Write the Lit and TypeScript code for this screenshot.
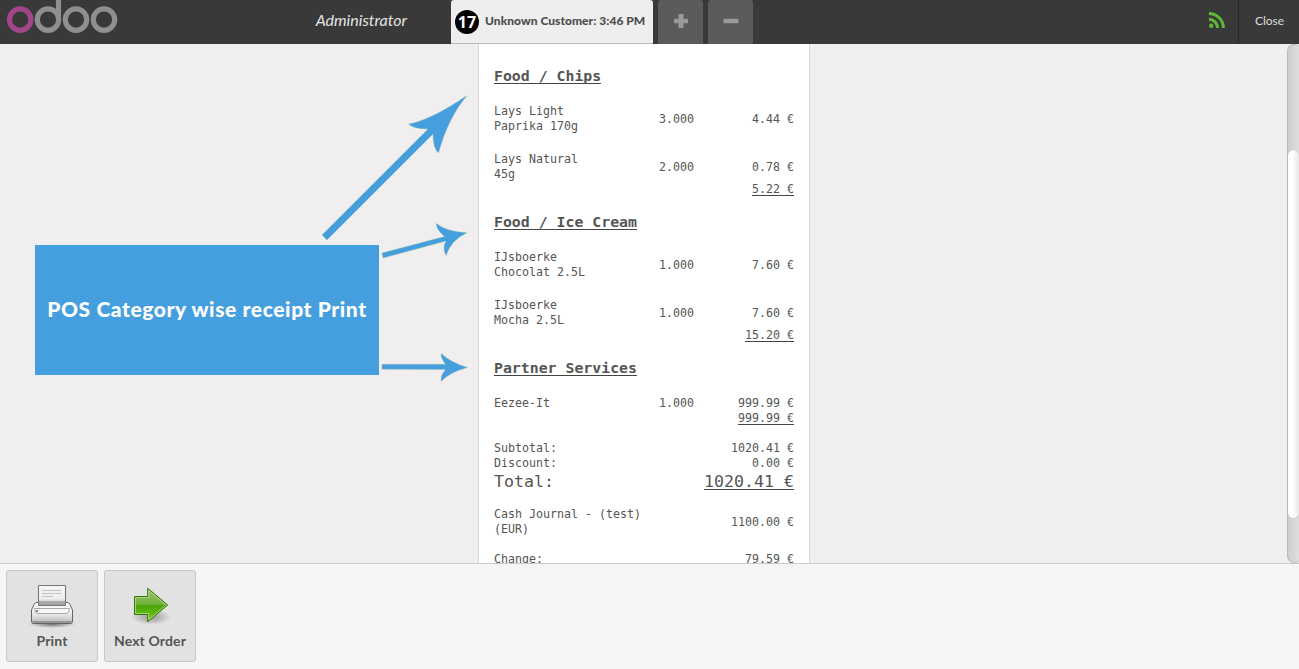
import { LitElement, html, css, svg } from "lit";
import { customElement } from "lit/decorators.js";

interface Line {
  name: string[];
  qty: string;
  price: string;
}

interface Category {
  title: string;
  lines: Line[];
  total: string;
}

const categories: Category[] = [
  {
    title: "Food / Chips",
    lines: [
      { name: ["Lays Light", "Paprika 170g"], qty: "3.000", price: "4.44 €" },
      { name: ["Lays Natural", "45g"], qty: "2.000", price: "0.78 €" },
    ],
    total: "5.22 €",
  },
  {
    title: "Food / Ice Cream",
    lines: [
      { name: ["IJsboerke", "Chocolat 2.5L"], qty: "1.000", price: "7.60 €" },
      { name: ["IJsboerke", "Mocha 2.5L"], qty: "1.000", price: "7.60 €" },
    ],
    total: "15.20 €",
  },
  {
    title: "Partner Services",
    lines: [{ name: ["Eezee-It"], qty: "1.000", price: "999.99 €" }],
    total: "999.99 €",
  },
];

@customElement("pos-topbar")
class PosTopbar extends LitElement {
  static styles = css`
    :host {
      display: flex;
      height: 44px;
      background: #393939;
      color: #ddd;
      font-family: Lato, sans-serif;
    }
    .brand {
      width: 435px;
      display: flex;
      justify-content: space-between;
      box-sizing: border-box;
      padding-right: 27px;
      border-right: 1px solid #353535;
    }
    .logo {
      display: block;
    }
    .user {
      font-size: 16px;
      font-style: italic;
      line-height: 40px;
      color: #e4e4e4;
    }
    .tabs {
      display: flex;
      gap: 5px;
      padding-left: 16px;
      flex: 1;
    }
    .order {
      display: flex;
      align-items: center;
      box-sizing: border-box;
      width: 202px;
      padding: 0 0 0 4px;
      gap: 6px;
      background: #eee;
      border-bottom: 1px solid #bbb;
      border-radius: 3px 3px 0 0;
      color: #4d4d4d;
      font-size: 12px;
      font-weight: 900;
      white-space: nowrap;
    }
    .num {
      flex: none;
      width: 24px;
      height: 24px;
      border-radius: 50%;
      background: #000;
      color: #fff;
      text-align: center;
      font-family: "Open Sans", sans-serif;
      font-size: 16px;
      line-height: 24px;
      font-weight: 700;
    }
    .label {
      line-height: 41px;
      margin-top: -2px;
      letter-spacing: 0.04px;
    }
    .square {
      width: 45px;
      display: grid;
      place-items: center;
      background: #5b5b5b;
      border-radius: 3px 3px 0 0;
    }
    .wifi {
      width: 40px;
      display: flex;
      border-right: 1px solid #292929;
      margin-left: auto;
    }
    .close {
      width: 59px;
      padding-left: 1px;
      text-align: center;
      font-size: 12px;
      line-height: 42px;
    }
  `;

  render() {
    return html`
      <div class="brand">
        <svg class="logo" width="120" height="40" fill="none" stroke="#8f8f8f" stroke-width="5.2">
          <circle cx="20.2" cy="19.6" r="10.7" stroke="#a24689" />
          <circle cx="48" cy="19.6" r="10.7" />
          <path d="M58.5 0V20" />
          <circle cx="76" cy="19.6" r="10.7" />
          <circle cx="104" cy="19.6" r="10.7" />
        </svg>
        <span class="user">Administrator</span>
      </div>
      <div class="tabs">
        <div class="order">
          <span class="num">17</span>
          <span class="label">Unknown Customer: 3:46 PM</span>
        </div>
        <div class="square">
          <svg width="45" height="44" fill="#999"><path d="M20.5 14h5v4.700h4.500v4.600h-4.500V28h-5v-4.700H16v-4.600h4.500z" /></svg>
        </div>
        <div class="square">
          <svg width="45" height="44"><rect x="15.500" y="18.700" width="15" height="4.600" rx="1" fill="#999" /></svg>
        </div>
      </div>
      <div class="wifi">
        <svg width="40" height="44" fill="none" stroke="#5eb937" stroke-width="3">
          <circle cx="13.200" cy="25.700" r="2.200" fill="#5eb937" stroke="none" />
          <path d="M11 19.300a8.700 8.700 0 0 1 8.600 8.700M11 13.500A14.500 14.500 0 0 1 25.400 28" />
        </svg>
      </div>
      <div class="close">Close</div>
    `;
  }
}

@customElement("pos-receipt")
class PosReceipt extends LitElement {
  static styles = css`
    :host {
      display: block;
      box-sizing: border-box;
      width: 332px;
      height: 519px;
      overflow: hidden;
      padding: 7px 15px 0;
      background: #fff;
      border: solid #dadadc;
      border-width: 0 1px;
      color: #555;
      font: 11.63px/15px "DejaVu Sans Mono", monospace;
    }
    .title {
      display: flex;
      height: 53px;
      box-sizing: border-box;
      padding-top: 15px;
      font-size: 14.850px;
      line-height: 20px;
      font-weight: 700;
    }
    .lines {
      display: flex;
      flex-direction: column;
      gap: 18px;
    }
    .row {
      display: grid;
      grid-template-columns: 150px 50px 100px;
      align-items: center;
    }
    .right {
      text-align: right;
      white-space: nowrap;
    }
    .text {
      display: block;
      white-space: nowrap;
    }
    .under {
      border-bottom: 1px solid #444;
      display: inline-block;
      height: 13px;
      line-height: 15px;
    }
    .subtotal {
      display: flex;
      justify-content: flex-end;
      height: 15px;
    }
    .title .under {
      height: 17px;
      line-height: 21px;
    }
    .pair {
      display: flex;
      justify-content: space-between;
      align-items: center;
    }
    .big {
      font-size: 16.600px;
      height: 21px;
      line-height: 21px;
      align-items: flex-start;
    }
    .big .under {
      height: 18px;
      line-height: 21px;
    }
    .sums,
    .journal,
    .change {
      margin-top: 15px;
    }
  `;

  render() {
    return html`
      ${categories.map(
        (c) => html`
          <div class="title"><span class="under">${c.title}</span></div>
          <div class="lines">
            ${c.lines.map(
              (l) => html`<div class="row">
                <div>${l.name.map((n) => html`<span class="text">${n}</span>`)}</div>
                <div class="right">${l.qty}</div>
                <div class="right">${l.price}</div>
              </div>`
            )}
          </div>
          <div class="subtotal"><span class="under">${c.total}</span></div>
        `
      )}
      <div class="sums">
        <div class="pair"><span>Subtotal:</span><span>1020.41 €</span></div>
        <div class="pair"><span>Discount:</span><span>0.00 €</span></div>
        <div class="pair big"><span>Total:</span><span class="under">1020.41 €</span></div>
      </div>
      <div class="pair journal">
        <div><span class="text">Cash Journal - (test)</span><span class="text">(EUR)</span></div>
        <span>1100.00 €</span>
      </div>
      <div class="pair change"><span>Change:</span><span>79.59 €</span></div>
    `;
  }
}

const printer = svg`
  <defs>
    <linearGradient id="body" x2="0" y2="1"><stop stop-color="#fff"/><stop offset=".6" stop-color="#e4e4e4"/><stop offset="1" stop-color="#b5b5b5"/></linearGradient>
    <linearGradient id="paper" x2="0" y2="1"><stop stop-color="#f6f6f6"/><stop offset=".65" stop-color="#eee"/><stop offset="1" stop-color="#aaa"/></linearGradient>
    <radialGradient id="pshade"><stop stop-color="#000" stop-opacity=".5"/><stop offset="1" stop-color="#000" stop-opacity="0"/></radialGradient>
  </defs>
  <ellipse cx="24" cy="41" rx="24" ry="4" fill="url(#pshade)"/>
  <path d="M6.500 20.500 Q7 19.500 9 19.500H39Q41 19.500 41.500 20.500L44.500 27V38.500Q44.500 40.500 42.500 40.500H5.500Q3.500 40.500 3.500 38.500V27Z" fill="url(#body)" stroke="#656565"/>
  <path d="M10.500 22.500V2.500H37.500V22.500Z" fill="url(#paper)" stroke="#777"/>
  <path d="M14 7.500H33M14 10.500H33M14 13.500H25" stroke="#c4c4c4"/>
  <path d="M11 18H37V22H11Z" fill="#999" opacity=".65"/>
  <path d="M6.500 25.500H41.500Q41 30.500 38 30.500H10Q7 30.500 6.500 25.500Z" fill="#f8f8f8" stroke="#aaa"/>
  <path d="M4 39H44" stroke="#888" stroke-width="1.500"/>
  <circle cx="9" cy="28" r="1.200" fill="#888"/>`;

const arrow = svg`
  <defs>
    <linearGradient id="green" x2="0" y2="1"><stop stop-color="#98c56e"/><stop offset=".48" stop-color="#72b13d"/><stop offset=".52" stop-color="#4da30b"/><stop offset="1" stop-color="#72cf18"/></linearGradient>
    <radialGradient id="ashade"><stop stop-color="#000" stop-opacity=".35"/><stop offset="1" stop-color="#000" stop-opacity="0"/></radialGradient>
  </defs>
  <ellipse cx="25" cy="34" rx="20" ry="8" fill="url(#ashade)"/>
  <path d="M8.500 13.500H21.700V5.200L41.700 22L21.700 38.800V31.500H8.500Z" fill="url(#green)" stroke="#3a7304"/>
  <path d="M9.500 14.500H22.700V7.400L40.200 22L22.700 36.600V30.500H9.500Z" fill="none" stroke="#b4dd8d" stroke-opacity=".8"/>`;

@customElement("app-root")
class AppRoot extends LitElement {
  static styles = css`
    :host {
      display: grid;
      grid-template-rows: 44px 519px 106px;
      width: 1299px;
      height: 669px;
      overflow: hidden;
      position: relative;
      background: #f0eeee;
      font-family: Lato, sans-serif;
    }
    .main {
      display: flex;
      padding-left: 478px;
    }
    .scroll {
      box-sizing: border-box;
      width: 12px;
      margin-left: auto;
      padding-top: 105px;
      border: 1px solid #bbb;
      border-right: 0;
      border-radius: 7px 4px 4px 7px;
      background: linear-gradient(90deg, #cecece, #e0e0e0);
    }
    .thumb {
      height: 368px;
      border-radius: 6px;
      background: linear-gradient(90deg, #fff 40%, #e8e8e8);
      box-shadow: 0 0 1px #888;
    }
    .actions {
      display: flex;
      gap: 6px;
      padding: 6px;
      border-top: 1px solid #cacaca;
      background: #f5f5f5;
    }
    .button {
      box-sizing: border-box;
      width: 92px;
      height: 92px;
      display: flex;
      flex-direction: column;
      align-items: center;
      padding-top: 12px;
      border: 1px solid #c8c8c8;
      border-radius: 3px;
      background: #e2e2e2;
      color: #555;
      font-size: 14px;
      letter-spacing: 0.13px;
      font-weight: 700;
      line-height: 20px;
      white-space: nowrap;
    }
    .callout {
      position: absolute;
      left: 35px;
      top: 245px;
      width: 344px;
      height: 130px;
      box-sizing: border-box;
      padding-bottom: 3px;
      display: grid;
      place-items: center;
      background: #459fdf;
      color: #fff;
      font-size: 21px;
      letter-spacing: 0.6px;
      font-weight: 900;
      white-space: nowrap;
    }
    .arrows {
      position: absolute;
      left: 310px;
      top: 80px;
    }
  `;

  render() {
    return html`
      <pos-topbar></pos-topbar>
      <div class="main">
        <pos-receipt></pos-receipt>
        <div class="scroll"><div class="thumb"></div></div>
      </div>
      <div class="actions">
        <div class="button"><svg width="48" height="48">${printer}</svg><span>Print</span></div>
        <div class="button"><svg width="48" height="48">${arrow}</svg><span>Next Order</span></div>
      </div>
      <div class="callout"><span>POS Category wise receipt Print</span></div>
      <svg class="arrows" width="165" height="310" fill="#459fdf" stroke="#9bbb9c" stroke-width=".35">
        <path d="M12 155L118 49Q103 49 98.700 44Q121 40 157 15.500Q138 38 128.500 73Q123 69 123 54L17 160Z" />
        <path d="M72 173L134.500 156.500Q126 149 126.300 143.500Q137 152 157 152.700Q141 160 136 175.500Q132 168 136 161L73 178Z" />
        <path d="M72 284.300H135.500Q130 277 131.300 273.500Q140 282 157.500 287.500Q140 292 131.300 301.300Q130 296 135.500 289.500L72 289.200Z" />
      </svg>
    `;
  }
}
